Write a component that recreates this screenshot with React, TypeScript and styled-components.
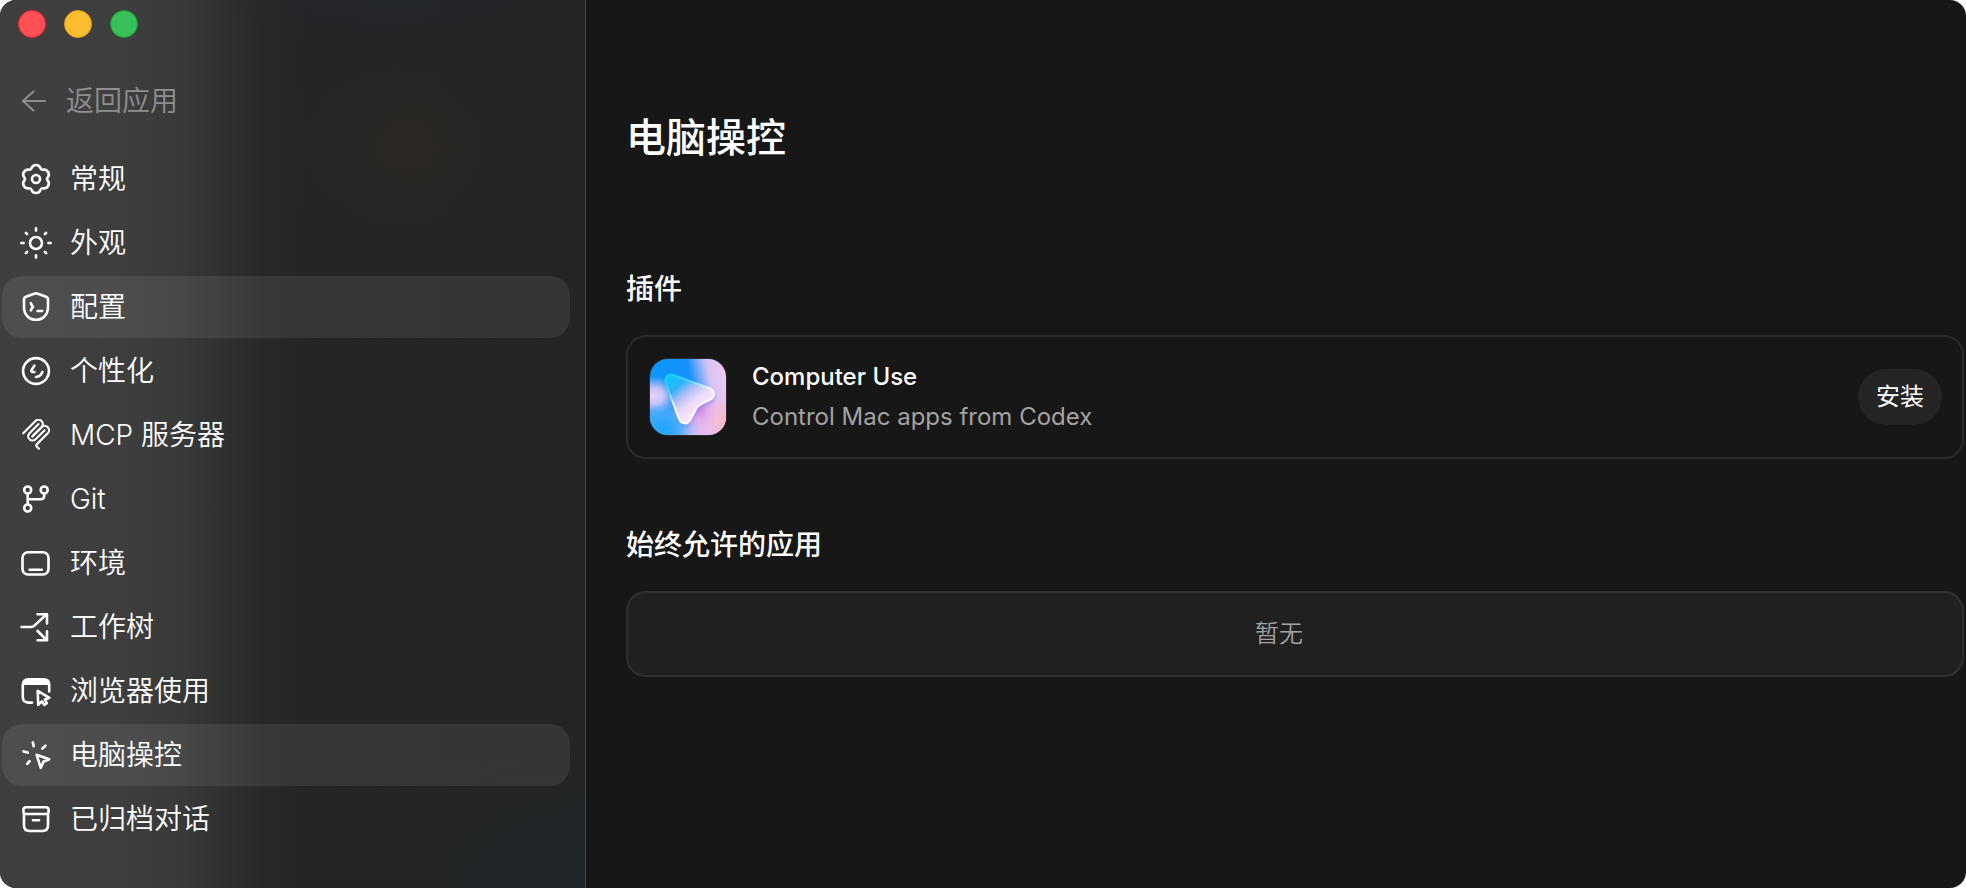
import React from "react";
import styled, { createGlobalStyle } from "styled-components";

const GlobalStyle = createGlobalStyle`
  *, *::before, *::after { box-sizing: border-box; }
  body {
    margin: 0;
    background: #fff;
    font-family: Inter, "Noto Sans CJK SC", sans-serif;
    line-height: 1.25;
    color: #fff;
    -webkit-font-smoothing: antialiased;
  }
`;

const Window = styled.div`
  display: flex;
  min-height: 100vh;
  border-radius: 16px;
  overflow: hidden;
  background: #171717;
`;

const Sidebar = styled.aside`
  flex: none;
  width: 586px;
  padding: 10px 15px 36px 2px;
  border-right: 1px solid #4a4a4a;
  background:
    radial-gradient(ellipse 130px 110px at 408px 146px, rgba(54, 44, 32, 0.36), transparent),
    radial-gradient(ellipse 180px 50px at 400px 0, rgba(32, 40, 54, 0.4), transparent),
    radial-gradient(ellipse 240px 160px at 586px 888px, rgba(30, 39, 44, 0.7), transparent),
    linear-gradient(90deg, #3f3f3f 0, #3e3e3e 125px, #383939 182px, #2f3030 224px, #282929 262px, #252526 305px, #242424 100%);
`;

const TrafficLights = styled.div`
  display: flex;
  gap: 18px;
  padding-left: 16px;
`;

const Light = styled.button<{ $fill: string; $rim: string }>`
  width: 28px;
  height: 28px;
  padding: 0;
  border: 1px solid ${(p) => p.$rim};
  border-radius: 50%;
  background: ${(p) => p.$fill};
`;

const BackLink = styled.a`
  display: flex;
  align-items: center;
  gap: 18px;
  height: 62px;
  margin: 32px 0 16px;
  padding-left: 18px;
  color: #8f8f8f;
  font-size: 28px;
  font-weight: 350;
  text-decoration: none;
`;

const NavList = styled.nav`
  display: flex;
  flex-direction: column;
  gap: 2px;
`;

const NavItem = styled.a<{ $active?: boolean }>`
  display: flex;
  align-items: center;
  gap: 18px;
  height: 62px;
  padding-left: 18px;
  border-radius: 20px;
  background: ${(p) => (p.$active ? "rgba(255, 255, 255, 0.08)" : "transparent")};
  color: #fff;
  font-size: 28px;
  font-weight: 350;
  text-decoration: none;
`;

const Icon = styled.svg`
  flex: none;
  fill: none;
  stroke: currentColor;
  stroke-width: 2.6;
  stroke-linecap: round;
  stroke-linejoin: round;
`;

const BackIcon = styled(Icon)`
  stroke-width: 2;
`;

const Main = styled.main`
  flex: 1;
  min-width: 0;
  padding: 107px 2px 0 40px;
`;

const Title = styled.h1`
  margin: 0 0 102px;
  font-size: 40px;
  line-height: 62px;
  font-weight: 500;
`;

const Section = styled.section`
  margin-bottom: 68px;
`;

const SectionTitle = styled.h2`
  margin: 0 0 28px;
  font-size: 28px;
  line-height: 36px;
  font-weight: 500;
`;

const PluginCard = styled.div`
  display: flex;
  align-items: center;
  gap: 25px;
  height: 124px;
  padding: 0 20px 0 21px;
  border: 2px solid #2b2b2b;
  border-radius: 20px;
`;

const PluginText = styled.div`
  flex: 1;
`;

const PluginName = styled.div`
  font-size: 24px;
  line-height: 40px;
  font-weight: 500;
`;

const PluginInfo = styled.div`
  font-size: 24px;
  line-height: 40px;
  color: #a3a3a3;
`;

const InstallButton = styled.button`
  height: 56px;
  padding: 0 18px;
  border: 0;
  border-radius: 28px;
  background: #252525;
  color: #fff;
  font: inherit;
  font-size: 24px;
`;

const EmptyCard = styled.div`
  display: flex;
  align-items: center;
  justify-content: center;
  height: 86px;
  padding-right: 32px;
  border: 2px solid #303030;
  border-radius: 20px;
  background: #202020;
  color: #a3a3a3;
  font-size: 24px;
  font-weight: 350;
`;

// Six-lobed gear outline, built from alternating lobe and valley points.
const gearPath = (() => {
  const point = (deg: number, r: number, along: number) => {
    const a = (deg * Math.PI) / 180;
    const x = 16 + r * Math.sin(a) + along * Math.cos(a);
    const y = 16 - r * Math.cos(a) + along * Math.sin(a);
    return `${x.toFixed(2)} ${y.toFixed(2)}`;
  };
  const radius = (i: number) => (i % 2 ? 11 : 14);
  const handle = (i: number) => (i % 2 ? 2.2 : 5);
  let d = `M${point(0, radius(0), 0)}`;
  for (let i = 0; i < 12; i++) {
    const n = i + 1;
    d += `C${point(i * 30, radius(i), handle(i))} ${point(n * 30, radius(n), -handle(n))} ${point(n * 30, radius(n), 0)}`;
  }
  return d + "Z";
})();

const glyphs: Record<string, React.ReactNode> = {
  general: (
    <>
      <path d={gearPath} />
      <circle cx="16" cy="16" r="4" />
    </>
  ),
  appearance: (
    <>
      <circle cx="16" cy="16" r="6" />
      <path d="M16 1.4v2.2M16 28.4v2.2M1.4 16h2.2M28.4 16h2.2M5.9 5.9l1.2 1.2M24.9 24.9l1.2 1.2M5.9 26.1l1.2-1.2M24.9 7.1l1.2-1.2" />
    </>
  ),
  config: (
    <>
      <path d="M14.8 2.6Q16 2.1 17.2 2.6L26 5.7Q28 6.5 28 8.7V16C28 23.6 23 28.8 16 28.8S4 23.6 4 16V8.7Q4 6.5 6 5.7Z" />
      <path d="M10.8 12.2Q11.6 14.4 13 15.8Q11.6 17.2 10.8 19.4M17.6 20h4.6" />
    </>
  ),
  personal: (
    <>
      <circle cx="16" cy="16" r="12.9" />
      <path d="M14.4 10.6L11.4 15.2Q10.8 16.8 12.4 17H14.4M22.4 16.9Q20.8 21.6 16 22" />
    </>
  ),
  mcp: (
    <g transform="translate(0 -1) scale(0.18)" strokeWidth="12">
      <path d="M18 84.85L85.88 16.97C95.25 7.6 110.45 7.6 119.82 16.97C129.2 26.34 129.2 41.54 119.82 50.91L68.56 102.18" />
      <path d="M69.27 101.47L119.82 50.91C129.2 41.54 144.39 41.54 153.77 50.91L154.12 51.27C163.49 60.64 163.49 75.83 154.12 85.21L92.72 146.6C89.6 149.72 89.6 154.79 92.72 157.91L105.33 170.52" />
      <path d="M102.85 33.94L52.65 84.15C43.28 93.52 43.28 108.71 52.65 118.09C62.02 127.46 77.22 127.46 86.59 118.09L136.79 67.88" />
    </g>
  ),
  git: (
    <>
      <circle cx="7.7" cy="7" r="3.5" />
      <circle cx="24.2" cy="7" r="3.5" />
      <circle cx="7.7" cy="25" r="3.5" />
      <path d="M7.7 10.5v11M24.2 10.5v2.2Q24.2 16.2 20.7 16.2H7.7" />
    </>
  ),
  environment: (
    <>
      <rect x="2.5" y="5.2" width="26" height="22.3" rx="5.5" />
      <path d="M9.6 22.7h12.2" />
    </>
  ),
  worktree: (
    <path d="M1.6 16H11Q13 16 14.4 14.6L26 3.8M17.6 3.2H27V12.4M17.6 20L26.6 29M27 20.4V29.2H17.6" />
  ),
  browser: (
    <>
      <path d="M12 27.6H8.4Q2.8 27.6 2.8 22V10Q2.8 4.4 8.4 4.4H23.6Q29.2 4.4 29.2 10V16.4" />
      <path d="M2.8 10Q2.8 4.4 8.4 4.4H23.6Q29.2 4.4 29.2 10Z" fill="currentColor" stroke="none" />
      <path d="M17.7 15.8L29.4 22.8L24.8 24.4L26.8 28.2L24.3 29.8L22 26.4L18.2 29.8Z" />
    </>
  ),
  computer: (
    <>
      <path d="M16.6 15.8L29.2 20.2L23.4 22.8L20.8 28.8Z" />
      <path d="M12.8 3.4L13.7 7.2M3.6 12.4L7.8 13.6M25.4 6.6L22.4 9.6M9.6 22.2L7.2 24.8" />
    </>
  ),
  archive: (
    <>
      <rect x="3.4" y="4.2" width="25.2" height="6.8" rx="2.8" />
      <path d="M4 11V22.6Q4 28 9.4 28H22.6Q28 28 28 22.6V11M13 17.3h6" />
    </>
  ),
};

const items = [
  { id: "general", label: "常规" },
  { id: "appearance", label: "外观" },
  { id: "config", label: "配置", active: true },
  { id: "personal", label: "个性化" },
  { id: "mcp", label: "MCP 服务器" },
  { id: "git", label: "Git" },
  { id: "environment", label: "环境" },
  { id: "worktree", label: "工作树" },
  { id: "browser", label: "浏览器使用" },
  { id: "computer", label: "电脑操控", active: true },
  { id: "archive", label: "已归档对话" },
];

const POINTER =
  "M25 17.2L60 30C66.5 32.5 66.5 39 60.5 42.2L52 46.2Q48.5 48 46.8 51.5L41.5 61.5C38.5 67 32 66.5 30 61L17.3 27C14.8 19.5 18.5 15 25 17.2Z";

function PluginLogo() {
  return (
    <svg width="78" height="78" viewBox="0 0 78 78" aria-hidden="true">
      <defs>
        <linearGradient id="base" x1="0" y1="0.2" x2="1" y2="0">
          <stop offset="0" stopColor="#0a98fb" />
          <stop offset="0.5" stopColor="#1690fb" />
          <stop offset="0.74" stopColor="#d6c4f4" />
          <stop offset="1" stopColor="#f6cdf0" />
        </linearGradient>
        <radialGradient id="lilac">
          <stop offset="0" stopColor="#e9d0f8" />
          <stop offset="0.4" stopColor="#dccbf8" stopOpacity="0.9" />
          <stop offset="1" stopColor="#c9b4f2" stopOpacity="0" />
        </radialGradient>
        <radialGradient id="sky">
          <stop offset="0" stopColor="#1ea4fc" />
          <stop offset="0.5" stopColor="#48adfb" stopOpacity="0.85" />
          <stop offset="1" stopColor="#8cb8f6" stopOpacity="0" />
        </radialGradient>
        <radialGradient id="orchid">
          <stop offset="0" stopColor="#d68ce6" />
          <stop offset="1" stopColor="#e2a8ea" stopOpacity="0" />
        </radialGradient>
        <radialGradient id="peach">
          <stop offset="0" stopColor="#ffb9b4" />
          <stop offset="1" stopColor="#f6c0dc" stopOpacity="0" />
        </radialGradient>
        <linearGradient id="glass" x1="0.1" y1="0.05" x2="0.7" y2="0.8">
          <stop offset="0" stopColor="#10c4fd" />
          <stop offset="0.25" stopColor="#2cb2fa" />
          <stop offset="0.48" stopColor="#b0bdf6" />
          <stop offset="0.7" stopColor="#ead9fa" />
          <stop offset="1" stopColor="#fbeafc" />
        </linearGradient>
        <linearGradient id="rim" x1="0" y1="0" x2="0.4" y2="0.8">
          <stop offset="0" stopColor="#0bd0fe" />
          <stop offset="0.4" stopColor="#58d4ff" />
          <stop offset="0.75" stopColor="#fff" />
          <stop offset="1" stopColor="#fff" />
        </linearGradient>
        <clipPath id="tile">
          <rect x="1" y="1" width="76" height="76" rx="18" />
        </clipPath>
        <filter id="soft" x="-20%" y="-20%" width="140%" height="140%">
          <feGaussianBlur stdDeviation="2" />
        </filter>
        <filter id="softer" x="-30%" y="-30%" width="160%" height="160%">
          <feGaussianBlur stdDeviation="5" />
        </filter>
      </defs>
      <rect width="78" height="78" rx="19" fill="#2c2c2c" />
      <g clipPath="url(#tile)">
        <rect width="78" height="78" fill="url(#base)" />
        <rect x="28" y="44" width="60" height="44" fill="#e4bdf0" filter="url(#softer)" />
        <ellipse cx="4" cy="38" rx="26" ry="20" fill="url(#lilac)" />
        <ellipse cx="14" cy="70" rx="38" ry="24" fill="url(#sky)" />
        <ellipse cx="50" cy="52" rx="20" ry="20" fill="url(#orchid)" />
        <ellipse cx="78" cy="64" rx="24" ry="32" fill="url(#peach)" />
        <path d={POINTER} transform="translate(1 2)" fill="#4a5ce8" opacity="0.45" filter="url(#soft)" />
        <path d={POINTER} fill="url(#glass)" stroke="url(#rim)" strokeWidth="2" />
      </g>
    </svg>
  );
}

export default function App() {
  return (
    <>
      <GlobalStyle />
      <Window>
        <Sidebar>
          <TrafficLights>
            <Light type="button" aria-label="关闭" $fill="#ff5055" $rim="#e8262c" />
            <Light type="button" aria-label="最小化" $fill="#fcbd2e" $rim="#e6a010" />
            <Light type="button" aria-label="缩放" $fill="#37c058" $rim="#169c2e" />
          </TrafficLights>
          <BackLink href="#app">
            <BackIcon width="28" height="28" viewBox="0 0 28 28" aria-hidden="true">
              <path d="M25 14H3M13.4 4.4L3 14L13.4 23.6" />
            </BackIcon>
            返回应用
          </BackLink>
          <NavList aria-label="设置">
            {items.map((item) => (
              <NavItem key={item.id} href={`#${item.id}`} $active={item.active}>
                <Icon width="32" height="32" viewBox="0 0 32 32" aria-hidden="true">
                  {glyphs[item.id]}
                </Icon>
                {item.label}
              </NavItem>
            ))}
          </NavList>
        </Sidebar>
        <Main>
          <Title>电脑操控</Title>
          <Section>
            <SectionTitle>插件</SectionTitle>
            <PluginCard>
              <PluginLogo />
              <PluginText>
                <PluginName>Computer Use</PluginName>
                <PluginInfo>Control Mac apps from Codex</PluginInfo>
              </PluginText>
              <InstallButton type="button">安装</InstallButton>
            </PluginCard>
          </Section>
          <Section>
            <SectionTitle>始终允许的应用</SectionTitle>
            <EmptyCard>暂无</EmptyCard>
          </Section>
        </Main>
      </Window>
    </>
  );
}
